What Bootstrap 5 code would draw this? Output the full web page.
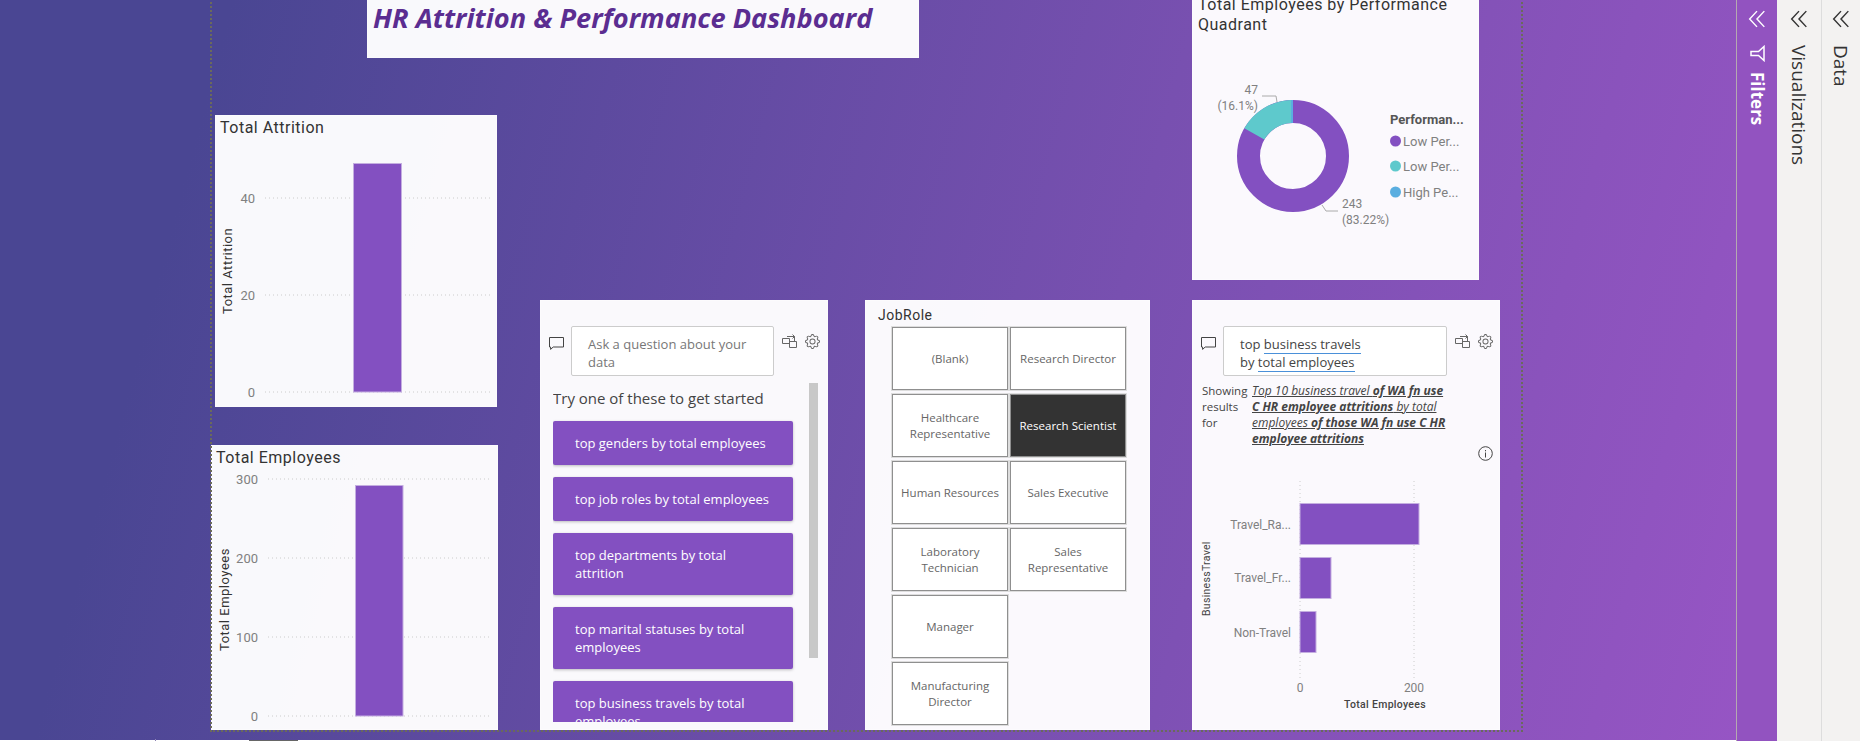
<!DOCTYPE html>
<html lang="en">
<head>
  <meta charset="UTF-8" />
  <meta name="viewport" content="width=device-width, initial-scale=1.0">
  <title>HR Attrition &amp; Performance Dashboard</title>
  <link href="https://cdn.jsdelivr.net/npm/bootstrap@5.3.2/dist/css/bootstrap.min.css" rel="stylesheet">
  <style>
    :root {
      --bar: #8350c1;
      --ink: #333;
      --din: Roboto, "Liberation Sans", sans-serif;
      --segoe: "Open Sans", "Liberation Sans", sans-serif;
    }
    html, body { height: 100%; overflow: hidden; }
    body { font-family: var(--segoe); background: #f3f2f1; }
    .report-view { height: 741px; }
    .report-canvas {
      width: 1736px;
      height: 741px;
      background: linear-gradient(105deg, #4a4693 12%, #7850b0 62%, #9655c4 100%);
      overflow: hidden;
    }
    .page-outline { left: 210px; top: -3px; width: 1313px; height: 735px; border: 2px dotted #6b6a5c; pointer-events: none; }
    .tile { background: rgba(255,255,255,.97); border: 1px solid rgba(255,255,255,.35); overflow: hidden; color: var(--ink); }

    .tile-head { left: 367px; top: -2px; width: 552px; height: 60px; padding: 1px 5px; }
    .head-text { font-family: var(--segoe); font-size: 27.2px; font-weight: 700; font-style: italic; color: #5b2d91; line-height: 36px; white-space: nowrap; }
    .tile-attr { left: 215px; top: 115px; width: 282px; height: 292px; }
    .tile-emp { left: 211px; top: 445px; width: 287px; height: 285px; }
    .tile-donut { left: 1192px; top: -10px; width: 287px; height: 290px; }
    .tile-qa1 { left: 540px; top: 300px; width: 288px; height: 430px; }
    .tile-slicer { left: 865px; top: 300px; width: 285px; height: 430px; }
    .tile-qa2 { left: 1192px; top: 300px; width: 308px; height: 430px; }
    .tile svg text { font-family: var(--din); }
    .chart-fill { position: absolute; left: -1px; top: -1px; }
    .chart-title { font-size: 16px; letter-spacing: .5px; fill: #333; }
    .axis-num { font-size: 13px; fill: #808080; }
    .axis-small { font-size: 12px; fill: #808080; }
    .axis-name { font-size: 13px; fill: #333; letter-spacing: .5px; }
    .axis-tiny { font-size: 10.5px; letter-spacing: .3px; fill: #444; }
    .grid-line { stroke: #ccc; stroke-width: 1; stroke-dasharray: 1 3; }
    .bar-fill { fill: var(--bar); stroke: #c4aee0; stroke-width: 1; }

    .ask-row { padding: 25px 0 0 8px; }
    .ask-icon { width: 15px; height: 13px; margin-top: 11px; flex: none; color: #444; }
    .ask-box { height: 50px; border: 1px solid #ccc; border-radius: 2px; background: #fff; font-size: 13px; line-height: 18px; padding: 8px 10px 0 16px; flex: none; margin-left: 7px; }
    .ask-box.empty { color: #777; width: 203px; }
    .ask-box.filled { color: #444; width: 224px; }
    .mini-icon { color: #666; flex: none; }
    .try-line { font-size: 15px; line-height: 20px; color: #444; margin: 5px 0 0; }
    .try-wrap { height: 339px; margin: 7px 9px 0 12px; overflow: hidden; position: relative; }
    .try-list { width: 240px; margin-top: 13px; gap: 12px; }
    .try-scroll { position: absolute; top: 0; right: 0; width: 9px; height: 275px; background: #c8c8c8; }
    .btn.try-btn { background: var(--bar); color: #fff; border: 0; border-radius: 2px; font-size: 13px; line-height: 18px; text-align: left; padding: 13px 22px; box-shadow: 0 1px 3px rgba(0,0,0,.25); }
    .btn.try-btn.tall { height: 62px; }

    .slicer-name { font-family: var(--din); font-size: 14px; letter-spacing: .5px; line-height: 17px; color: #333; padding: 6px 0 0 12px; }
    .slicer-grid { display: grid; grid-template-columns: 116px 116px; grid-auto-rows: 63px; column-gap: 2px; row-gap: 4px; margin: 3px 0 0 26px; }
    .slicer-cell { border: 1px solid #8f8f8f; outline: 1px solid #ddd; background: #fff; color: #666; font-size: 11.5px; line-height: 16px; text-align: center; padding: 0 6px; }
    .slicer-cell.on { background: #333; color: #fff; }

    .blue-line { border-bottom: 1px solid #4a90d9; padding-bottom: 0; }
    .result-row { padding: 7px 0 0 9px; line-height: 16px; color: #444; }
    .result-who { width: 50px; flex: none; font-size: 11.5px; }
    .result-what { width: 199px; flex: none; font-size: 12px; font-style: italic; text-decoration: underline; }
    .info-row { height: 20px; padding-right: 6px; color: #444; margin-top: -1px; }

    .side-pane { height: 741px; flex: none; padding-top: 10px; }
    .side-name { writing-mode: vertical-rl; font-size: 19px; font-weight: 500; line-height: 22px; white-space: nowrap; margin-top: 17px; }
    .pane-filter { width: 41px; background: #9253c0; border-left: 1px solid #b5a9b0; color: #fff; }
    .pane-filter .side-name { font-size: 17px; font-weight: 700; margin-top: 10px; }
    .pane-viz { width: 45px; background: #f3f2f1; border-right: 1px solid #ddd; color: #333; }
    .pane-data { width: 38px; background: #f3f2f1; color: #333; }
    .funnel { margin-top: 17px; }
    .foot-strip { left: 0; right: 0; bottom: 0; height: 1px; background: #fff; }
    .foot-tick { left: 155px; bottom: 0; width: 1px; height: 2px; background: #8d83b5; }
    .foot-tab { left: 249px; bottom: 0; width: 49px; height: 1px; background: #666; }
  </style>
</head>
<body>
  <svg width="0" height="0" class="position-absolute">
    <symbol id="ico-gear" viewBox="0 0 16 16">
      <path fill="currentColor" d="M8 4.754a3.246 3.246 0 1 0 0 6.492 3.246 3.246 0 0 0 0-6.492zM5.754 8a2.246 2.246 0 1 1 4.492 0 2.246 2.246 0 0 1-4.492 0z"/>
      <path fill="currentColor" d="M9.796 1.343c-.527-1.79-3.065-1.79-3.592 0l-.094.319a.873.873 0 0 1-1.255.52l-.292-.16c-1.64-.892-3.433.902-2.54 2.541l.159.292a.873.873 0 0 1-.52 1.255l-.319.094c-1.79.527-1.79 3.065 0 3.592l.319.094a.873.873 0 0 1 .52 1.255l-.16.292c-.892 1.64.901 3.434 2.541 2.54l.292-.159a.873.873 0 0 1 1.255.52l.094.319c.527 1.79 3.065 1.79 3.592 0l.094-.319a.873.873 0 0 1 1.255-.52l.292.16c1.64.893 3.434-.902 2.54-2.541l-.159-.292a.873.873 0 0 1 .52-1.255l.319-.094c1.79-.527 1.79-3.065 0-3.592l-.319-.094a.873.873 0 0 1-.52-1.255l.16-.292c.893-1.64-.902-3.433-2.541-2.54l-.292.159a.873.873 0 0 1-1.255-.52l-.094-.319zm-2.633.283c.246-.835 1.428-.835 1.674 0l.094.319a1.873 1.873 0 0 0 2.693 1.115l.291-.16c.764-.415 1.6.42 1.184 1.185l-.159.292a1.873 1.873 0 0 0 1.116 2.692l.318.094c.835.246.835 1.428 0 1.674l-.319.094a1.873 1.873 0 0 0-1.115 2.693l.16.291c.415.764-.42 1.6-1.185 1.184l-.291-.159a1.873 1.873 0 0 0-2.693 1.116l-.094.318c-.246.835-1.428.835-1.674 0l-.094-.319a1.873 1.873 0 0 0-2.692-1.115l-.292.16c-.764.415-1.6-.42-1.184-1.185l.159-.291A1.873 1.873 0 0 0 1.945 8.93l-.319-.094c-.835-.246-.835-1.428 0-1.674l.319-.094A1.873 1.873 0 0 0 3.06 4.377l-.16-.292c-.415-.764.42-1.6 1.185-1.184l.292.159a1.873 1.873 0 0 0 2.692-1.115l.094-.319z"/>
    </symbol>
    <symbol id="ico-chat" viewBox="0 0 15 13">
      <path fill="none" stroke="currentColor" d="M.5.5h14v9.500H4.200L1.600 12.400V10H.5z"/>
    </symbol>
    <symbol id="ico-turn" viewBox="0 0 15 14">
      <path fill="none" stroke="currentColor" d="M.5 4.500h7v5h-7zM7.500 7.500h7v6h-7zM5 2.500h7.500M10.500.5l2 2-2 2M12.500 2.500v5"/>
    </symbol>
    <symbol id="ico-back" viewBox="0 0 16 16">
      <path fill="none" stroke="currentColor" stroke-width="1.300" d="M8 1 1.500 8 8 15M14.500 1 8 8l6.500 7"/>
    </symbol>
  </svg>

  <div class="report-view d-flex">
    <main class="report-canvas position-relative flex-shrink-0">
      <section class="tile tile-head position-absolute">
        <div class="head-text">HR Attrition &amp; Performance Dashboard</div>
      </section>

      <section class="tile tile-attr position-absolute">
        <svg class="chart-fill" width="282" height="292" viewBox="215 115 282 292">
          <text class="chart-title" x="220" y="133">Total Attrition</text>
          <line class="grid-line" x1="265" x2="491" y1="198" y2="198"/>
          <line class="grid-line" x1="265" x2="491" y1="295" y2="295"/>
          <line class="grid-line" x1="265" x2="491" y1="392" y2="392"/>
          <text class="axis-num" x="255" y="203" text-anchor="end">40</text>
          <text class="axis-num" x="255" y="300" text-anchor="end">20</text>
          <text class="axis-num" x="255" y="397" text-anchor="end">0</text>
          <text class="axis-name" transform="translate(232 314) rotate(-90)">Total Attrition</text>
          <rect class="bar-fill" x="353.500" y="163.500" width="48" height="228.500"/>
        </svg>
      </section>

      <section class="tile tile-emp position-absolute">
        <svg class="chart-fill" width="287" height="285" viewBox="211 445 287 285">
          <text class="chart-title" x="216" y="463">Total Employees</text>
          <line class="grid-line" x1="268" x2="489" y1="479" y2="479"/>
          <line class="grid-line" x1="268" x2="489" y1="558" y2="558"/>
          <line class="grid-line" x1="268" x2="489" y1="637" y2="637"/>
          <line class="grid-line" x1="268" x2="489" y1="716" y2="716"/>
          <text class="axis-num" x="258" y="484" text-anchor="end">300</text>
          <text class="axis-num" x="258" y="563" text-anchor="end">200</text>
          <text class="axis-num" x="258" y="642" text-anchor="end">100</text>
          <text class="axis-num" x="258" y="721" text-anchor="end">0</text>
          <text class="axis-name" transform="translate(229 651) rotate(-90)">Total Employees</text>
          <rect class="bar-fill" x="355.500" y="485.500" width="47.500" height="230.500"/>
        </svg>
      </section>

      <section class="tile tile-donut position-absolute">
        <svg class="chart-fill" width="287" height="290" viewBox="1192 -10 287 290">
          <text class="chart-title" x="1198" y="10">Total Employees by Performance</text>
          <text class="chart-title" x="1198" y="30">Quadrant</text>
          <circle cx="1293" cy="156" r="44.500" fill="none" stroke="#8350c1" stroke-width="23"/>
          <path d="M1244.300 128.300A56 56 0 0 1 1291 100V123A33 33 0 0 0 1264.300 139.600z" fill="#5ec9cc"/>
          <path d="M1291 100 A56 56 0 0 1 1293 100V123A33 33 0 0 0 1291 123z" fill="#5aaee0"/>
          <path d="M1262 96H1276L1277 102M1322 205L1326 211H1338" fill="none" stroke="#aaa"/>
          <g class="axis-small">
            <text x="1258" y="94" text-anchor="end">47</text>
            <text x="1258" y="110" text-anchor="end">(16.1%)</text>
            <text x="1342" y="208">243</text>
            <text x="1342" y="224">(83.22%)</text>
          </g>
          <text x="1390" y="124" style="font-size:13px;font-weight:700" fill="#555">Performan...</text>
          <circle cx="1395.500" cy="141" r="5.500" fill="#8350c1"/>
          <circle cx="1395.500" cy="166" r="5.500" fill="#5ec9cc"/>
          <circle cx="1395.500" cy="192" r="5.500" fill="#5aaee0"/>
          <g class="axis-num">
            <text x="1403" y="146">Low Per...</text>
            <text x="1403" y="171">Low Per...</text>
            <text x="1403" y="197">High Pe...</text>
          </g>
        </svg>
      </section>

      <section class="tile tile-qa1 position-absolute">
        <div class="ask-row d-flex align-items-start">
          <svg class="ask-icon"><use href="#ico-chat"/></svg>
          <div class="ask-box empty">Ask a question about your data</div>
          <svg class="mini-icon ms-2 mt-2" width="15" height="14"><use href="#ico-turn"/></svg>
          <svg class="mini-icon ms-2 mt-2" width="15" height="15"><use href="#ico-gear"/></svg>
        </div>
        <div class="try-wrap">
          <p class="try-line">Try one of these to get started</p>
          <div class="try-list d-flex flex-column">
            <button class="btn try-btn" type="button">top genders by total employees</button>
            <button class="btn try-btn" type="button">top job roles by total employees</button>
            <button class="btn try-btn tall" type="button">top departments by total attrition</button>
            <button class="btn try-btn tall" type="button">top marital statuses by total employees</button>
            <button class="btn try-btn tall flex-shrink-0" type="button">top business travels by total employees</button>
          </div>
          <div class="try-scroll"></div>
        </div>
      </section>

      <section class="tile tile-slicer position-absolute">
        <div class="slicer-name">JobRole</div>
        <div class="slicer-grid">
          <div class="slicer-cell d-flex align-items-center justify-content-center">(Blank)</div>
          <div class="slicer-cell d-flex align-items-center justify-content-center">Research Director</div>
          <div class="slicer-cell d-flex align-items-center justify-content-center">Healthcare Representative</div>
          <div class="slicer-cell on d-flex align-items-center justify-content-center">Research Scientist</div>
          <div class="slicer-cell d-flex align-items-center justify-content-center">Human Resources</div>
          <div class="slicer-cell d-flex align-items-center justify-content-center">Sales Executive</div>
          <div class="slicer-cell d-flex align-items-center justify-content-center">Laboratory Technician</div>
          <div class="slicer-cell d-flex align-items-center justify-content-center">Sales Representative</div>
          <div class="slicer-cell d-flex align-items-center justify-content-center">Manager</div>
          <div></div>
          <div class="slicer-cell d-flex align-items-center justify-content-center">Manufacturing Director</div>
        </div>
      </section>

      <section class="tile tile-qa2 position-absolute">
        <div class="ask-row d-flex align-items-start">
          <svg class="ask-icon"><use href="#ico-chat"/></svg>
          <div class="ask-box filled">top <span class="blue-line">business travels</span><br>by <span class="blue-line">total employees</span></div>
          <svg class="mini-icon ms-2 mt-2" width="15" height="14"><use href="#ico-turn"/></svg>
          <svg class="mini-icon ms-2 mt-2" width="15" height="15"><use href="#ico-gear"/></svg>
        </div>
        <div class="result-row d-flex">
          <div class="result-who">Showing results for</div>
          <div class="result-what">Top 10 business travel <b>of WA fn use C HR employee attritions</b> by total employees <b>of those WA fn use C HR employee attritions</b></div>
        </div>
        <div class="info-row d-flex justify-content-end">
          <svg width="15" height="15" viewBox="0 0 15 15"><circle cx="7.500" cy="7.500" r="6.800" fill="none" stroke="currentColor"/><path d="M7.500 6.500v5M7.500 4v1.300" stroke="currentColor" fill="none"/></svg>
        </div>
        <svg class="chart-fill" width="308" height="430" viewBox="1192 300 308 430">
          <line class="grid-line" x1="1300" x2="1300" y1="481" y2="678"/>
          <line class="grid-line" x1="1414" x2="1414" y1="481" y2="678"/>
          <rect class="bar-fill" x="1300" y="503.500" width="119" height="41"/>
          <rect class="bar-fill" x="1300" y="557.500" width="31" height="41"/>
          <rect class="bar-fill" x="1300" y="611.500" width="16" height="41"/>
          <g class="axis-small">
            <text x="1291" y="529" text-anchor="end">Travel_Ra...</text>
            <text x="1291" y="582" text-anchor="end">Travel_Fr...</text>
            <text x="1291" y="637" text-anchor="end">Non-Travel</text>
            <text x="1300" y="692" text-anchor="middle">0</text>
            <text x="1414" y="692" text-anchor="middle">200</text>
          </g>
          <text class="axis-tiny" x="1385" y="708" text-anchor="middle" font-weight="500">Total Employees</text>
          <text class="axis-tiny" transform="translate(1210 616) rotate(-90)">BusinessTravel</text>
        </svg>
      </section>

      <div class="page-outline position-absolute"></div>
      <div class="foot-strip position-absolute"></div>
      <div class="foot-tick position-absolute"></div>
      <div class="foot-tab position-absolute"></div>
    </main>

    <aside class="side-pane pane-filter d-flex flex-column align-items-center">
      <svg width="18" height="18"><use href="#ico-back"/></svg>
      <svg class="funnel" width="16" height="17" viewBox="0 0 16 17"><path d="M15 1.500v14L9.500 10.500H2v-4h7.500z" fill="none" stroke="currentColor" stroke-width="1.500"/></svg>
      <span class="side-name">Filters</span>
    </aside>
    <aside class="side-pane pane-viz d-flex flex-column align-items-center">
      <svg width="18" height="18"><use href="#ico-back"/></svg>
      <span class="side-name">Visualizations</span>
    </aside>
    <aside class="side-pane pane-data d-flex flex-column align-items-center">
      <svg width="18" height="18"><use href="#ico-back"/></svg>
      <span class="side-name">Data</span>
    </aside>
  </div>
</body>
</html>
